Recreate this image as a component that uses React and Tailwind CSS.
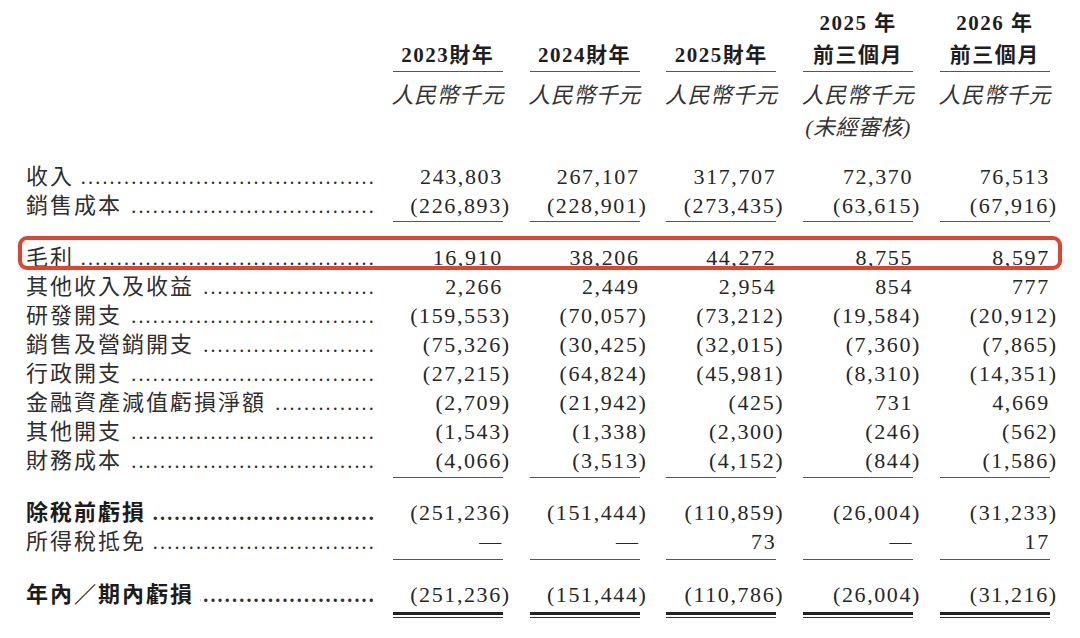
import React from 'react';

const rows = [
  { label: '收入', vals: ['243,803', '267,107', '317,707', '72,370', '76,513'] },
  { label: '銷售成本', vals: ['(226,893)', '(228,901)', '(273,435)', '(63,615)', '(67,916)'], line: 'single' },
  { label: '毛利', vals: ['16,910', '38,206', '44,272', '8,755', '8,597'], gap: 'mt-[21px]', boxed: true },
  { label: '其他收入及收益', vals: ['2,266', '2,449', '2,954', '854', '777'] },
  { label: '研發開支', vals: ['(159,553)', '(70,057)', '(73,212)', '(19,584)', '(20,912)'] },
  { label: '銷售及營銷開支', vals: ['(75,326)', '(30,425)', '(32,015)', '(7,360)', '(7,865)'] },
  { label: '行政開支', vals: ['(27,215)', '(64,824)', '(45,981)', '(8,310)', '(14,351)'] },
  { label: '金融資產減值虧損淨額', vals: ['(2,709)', '(21,942)', '(425)', '731', '4,669'] },
  { label: '其他開支', vals: ['(1,543)', '(1,338)', '(2,300)', '(246)', '(562)'] },
  { label: '財務成本', vals: ['(4,066)', '(3,513)', '(4,152)', '(844)', '(1,586)'], line: 'single', lineGap: 'mt-[2px]' },
  { label: '除稅前虧損', vals: ['(251,236)', '(151,444)', '(110,859)', '(26,004)', '(31,233)'], gap: 'mt-[20px]', bold: true },
  { label: '所得稅抵免', vals: ['—', '—', '73', '—', '17'], line: 'single', lineGap: 'mt-[3px]' },
  { label: '年內／期內虧損', vals: ['(251,236)', '(151,444)', '(110,786)', '(26,004)', '(31,216)'], gap: 'mt-[20px]', bold: true, line: 'double' },
];

const headers = [
  { top: '', title: '2023財年', unit: '人民幣千元' },
  { top: '', title: '2024財年', unit: '人民幣千元' },
  { top: '', title: '2025財年', unit: '人民幣千元' },
  { top: '2025 年', title: '前三個月', unit: '人民幣千元', note: '(未經審核)' },
  { top: '2026 年', title: '前三個月', unit: '人民幣千元' },
];

const DOTS = '.'.repeat(60);

function Num({ v, line, lineGap }) {
  const neg = v.startsWith('(');
  const body = neg ? v.slice(0, -1) : v;
  return (
    <div className="flex flex-col">
      <div className="h-[29px] leading-[29px] text-right text-[22px] tracking-[1.6px] text-[#262626] whitespace-nowrap">
        {body}
        {neg && <span className="mr-[-8px]">)</span>}
      </div>
      {line === 'single' && <div className={`${lineGap || 'mt-[1px]'} h-px bg-[#555]`} />}
      {line === 'double' && (
        <>
          <div className="mt-[3px] h-[3px] bg-[#222]" />
          <div className="mt-[2px] h-px bg-[#333]" />
        </>
      )}
    </div>
  );
}

function Row({ r }) {
  return (
    <div className={`relative grid grid-cols-[340px_repeat(5,110px)] gap-x-[26.75px] items-start ${r.gap || ''}`}>
      {r.boxed && (
        <div className="absolute left-[-8px] right-[18px] top-[-7px] h-[34px] border-4 border-[#e0432f] rounded-[9px]" />
      )}
      <div className="h-[29px] mr-[-10px] flex items-center text-[22px] text-[#2e2e2e] overflow-hidden">
        <span className={`shrink-0 tracking-[2px] ${r.bold ? 'font-bold text-[#1c1c1c]' : ''}`}>{r.label}</span>
        <div className="flex-1 ml-[6px] flex justify-end overflow-hidden">
          <span className={`shrink-0 tracking-[2.2px] text-[20px] ${r.bold ? 'font-bold' : ''}`}>{DOTS}</span>
        </div>
      </div>
      {r.vals.map((v, i) => (
        <Num key={i} v={v} line={r.line} lineGap={r.lineGap} />
      ))}
    </div>
  );
}

export default function App() {
  return (
    <div className="w-[1080px] h-[638px] bg-white overflow-hidden font-['Liberation_Serif','Noto_Sans_CJK_TC',serif]">
      <div className="pl-[26px] pt-[7px]">
        {/* header */}
        <div className="grid grid-cols-[340px_repeat(5,110px)] gap-x-[26.75px]">
          <div />
          {headers.map((h, i) => (
            <div key={i} className="flex flex-col items-center">
              <div className="w-full flex flex-col items-center border-b border-[#555] font-bold text-[21px] tracking-[1.5px] text-[#1e1e1e]">
                <div className="h-[32px] leading-[32px] whitespace-pre">{h.top || ' '}</div>
                <div className="h-[32px] leading-[32px] whitespace-nowrap">{h.title}</div>
              </div>
              <div className="mt-[8px] h-[32px] leading-[32px] italic text-[22px] tracking-[0.5px] text-[#333] whitespace-nowrap">
                {h.unit}
              </div>
              {h.note && (
                <div className="h-[32px] leading-[32px] italic text-[22px] tracking-[0.5px] text-[#333] whitespace-nowrap">
                  {h.note}
                </div>
              )}
            </div>
          ))}
        </div>

        {/* body */}
        <div className="mt-[18px]">
          {rows.map((r, i) => (
            <Row key={i} r={r} />
          ))}
        </div>
      </div>
    </div>
  );
}
